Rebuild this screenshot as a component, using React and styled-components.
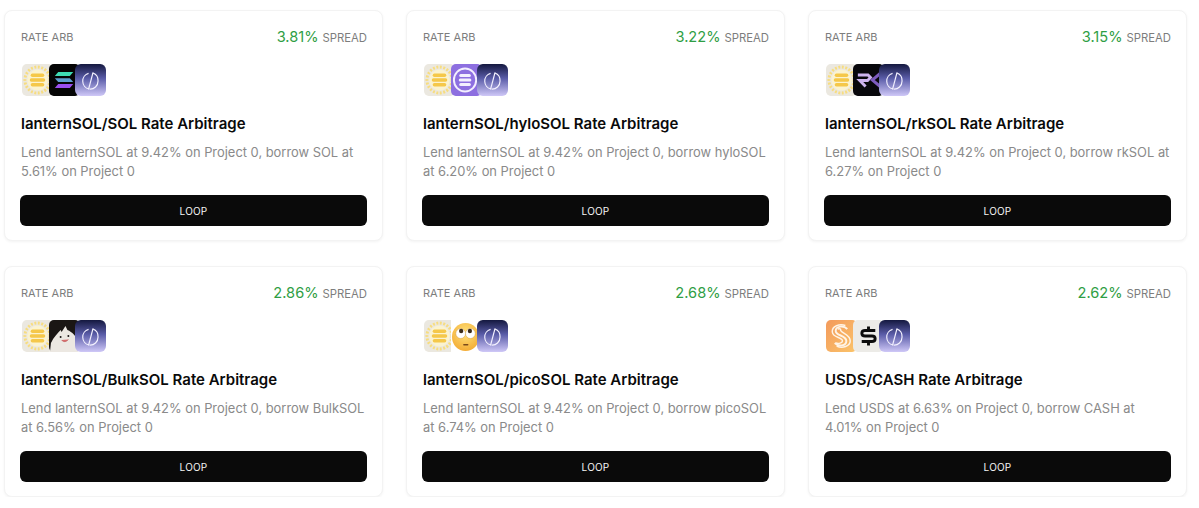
import React from "react";
import styled, { createGlobalStyle } from "styled-components";

const Global = createGlobalStyle`
  html, body {
    margin: 0;
    padding: 0;
    background: #fff;
    font-family: Inter, "Liberation Sans", sans-serif;
  }
`;

const Grid = styled.div`
  display: grid;
  grid-template-columns: repeat(3, 379px);
  column-gap: 23px;
  row-gap: 25px;
  padding: 10px 0 0 4px;
`;

const Card = styled.div`
  box-sizing: border-box;
  height: 231px;
  padding: 15px 15px 14px;
  background: #fff;
  border: 1px solid #f3f3f3;
  border-radius: 8px;
  box-shadow: 0 1px 3px rgba(0, 0, 0, 0.05);
  display: flex;
  flex-direction: column;
`;

const Header = styled.div`
  display: flex;
  justify-content: space-between;
  align-items: center;
  height: 22px;
`;

const Tag = styled.span`
  font-size: 11px;
  color: #7d7d7d;
  margin-left: 1px;
`;

const Spread = styled.span`
  font-size: 11.3px;
  color: #7d7d7d;
  display: flex;
  align-items: baseline;
  gap: 4px;
`;

const Pct = styled.span`
  font-size: 14.6px;
  color: #2f9e44;
`;

const Icons = styled.div`
  display: flex;
  margin: 16px 0 0 2px;
  height: 32px;
`;

const Icon = styled.svg`
  width: 31px;
  height: 32px;
  display: block;
  margin-left: -4.5px;
  &:first-child {
    margin-left: 0;
  }
`;

const Title = styled.h3`
  margin: 17px 0 0 1px;
  font-size: 15px;
  line-height: 22px;
  font-weight: 600;
  color: #0a0a0a;
`;

const Desc = styled.p`
  margin: 8px 0 0 1px;
  font-size: 12.9px;
  line-height: 19px;
  color: #8a8a8a;
`;

const Button = styled.button`
  margin-top: auto;
  height: 31px;
  border: none;
  border-radius: 6px;
  background: #0a0a0a;
  color: #f5f5f5;
  font-family: inherit;
  font-size: 10px;
  font-weight: 400;
  letter-spacing: 0.2px;
  cursor: pointer;
`;

const Lantern = () => (
  <Icon viewBox="0 0 32 32" preserveAspectRatio="none">
    <rect width="32" height="32" rx="5" fill="#ebe8e0" />
    <circle cx="16" cy="16" r="13" fill="none" stroke="#f7dd80" strokeWidth="3" strokeDasharray="2 1.6" />
    <circle cx="16" cy="16" r="10.5" fill="#fbf3cf" />
    <rect x="9" y="9.5" width="14" height="3.4" rx="1.7" fill="#f5c84a" />
    <rect x="8" y="14.3" width="16" height="3.4" rx="1.7" fill="#f5c84a" />
    <rect x="9" y="19.1" width="14" height="3.4" rx="1.7" fill="#f5c84a" />
  </Icon>
);

const Phi = () => (
  <Icon viewBox="0 0 32 32" preserveAspectRatio="none">
    <defs>
      <linearGradient id="phiBg" x1="0" y1="0" x2="0" y2="1">
        <stop offset="0" stopColor="#14183f" />
        <stop offset="0.45" stopColor="#5a5ca8" />
        <stop offset="1" stopColor="#cfc8f7" />
      </linearGradient>
    </defs>
    <rect width="32" height="32" rx="6" fill="url(#phiBg)" />
    <path d="M14 9.4 A8 8 0 0 0 14.5 25" fill="none" stroke="#f4f2ff" strokeWidth="1.2" />
    <path d="M18.5 9 A8 8 0 0 1 23.8 17 A8 8 0 0 1 15 25" fill="none" stroke="#f4f2ff" strokeWidth="1.2" />
    <path d="M18.6 8.5 L14 25.4" fill="none" stroke="#f4f2ff" strokeWidth="1.2" />
  </Icon>
);

const Solana = () => (
  <Icon viewBox="0 0 32 32" preserveAspectRatio="none">
    <rect width="32" height="32" rx="5" fill="#050505" />
    <path d="M9.5 8 H25 L21.5 12 H6 Z" fill="#3fdcb4" />
    <path d="M6 14.2 H21.5 L25 18 H9.5 Z" fill="#5f9fd0" />
    <path d="M9.5 20 H25 L21.5 24 H6 Z" fill="#9b4ff0" />
  </Icon>
);

const Hylo = () => (
  <Icon viewBox="0 0 32 32" preserveAspectRatio="none">
    <rect width="32" height="32" rx="5" fill="#8d6fe0" />
    <circle cx="14.5" cy="16" r="11.5" fill="none" stroke="#f3effe" strokeWidth="2" />
    <rect x="8.5" y="10" width="12" height="3" rx="1.5" fill="#f3effe" />
    <rect x="8" y="14.5" width="13" height="3" rx="1.5" fill="#f3effe" />
    <rect x="8.5" y="19" width="12" height="3" rx="1.5" fill="#f3effe" />
  </Icon>
);

const Rk = () => (
  <Icon viewBox="0 0 32 32" preserveAspectRatio="none">
    <rect width="32" height="32" rx="5" fill="#08080c" />
    <path d="M5 11 H15.5 L18 13.5 L15 16.5 H7 L13 22.5" fill="none" stroke="#cdb4ee" strokeWidth="3" />
    <path d="M28 9.5 L20 16 L28 22.5" fill="none" stroke="#7e5cc0" strokeWidth="3" />
  </Icon>
);

const Bulk = () => (
  <Icon viewBox="0 0 32 32" preserveAspectRatio="none">
    <rect width="32" height="32" rx="5" fill="#1a1614" />
    <path d="M1 32 L2 23 C5 17 9 13 12 10 L13 12 L17 6 L19 10 C24 12 28 16 30 22 L30 32 Z" fill="#ece8e2" />
    <circle cx="12" cy="17" r="1" fill="#1a1614" />
    <circle cx="20" cy="16" r="1" fill="#1a1614" />
    <path d="M13 20 C15 22.5 18 22 20 19.5" fill="#d86d6d" stroke="#b55" strokeWidth="0.6" />
  </Icon>
);

const Pico = () => (
  <Icon viewBox="0 0 32 32" preserveAspectRatio="none">
    <defs>
      <radialGradient id="picoFace" cx="0.5" cy="0.35" r="0.75">
        <stop offset="0" stopColor="#ffe27a" />
        <stop offset="1" stopColor="#f2a52c" />
      </radialGradient>
    </defs>
    <rect width="32" height="32" fill="#fff" />
    <circle cx="15" cy="17" r="14" fill="url(#picoFace)" />
    <circle cx="10" cy="13.5" r="5" fill="#fff" stroke="#c98f3a" strokeWidth="0.4" />
    <circle cx="20" cy="13.5" r="5" fill="#fff" stroke="#c98f3a" strokeWidth="0.4" />
    <circle cx="10.5" cy="11" r="2.2" fill="#3b2a1a" />
    <circle cx="19.5" cy="11" r="2.2" fill="#3b2a1a" />
    <rect x="12.5" y="24" width="5.5" height="1.6" rx="0.8" fill="#7a4a1a" />
  </Icon>
);

const Usds = () => (
  <Icon viewBox="0 0 32 32" preserveAspectRatio="none">
    <defs>
      <linearGradient id="usdsBg" x1="0" y1="0" x2="1" y2="1">
        <stop offset="0" stopColor="#f39a5c" />
        <stop offset="1" stopColor="#fbc46a" />
      </linearGradient>
    </defs>
    <rect width="32" height="32" rx="5" fill="url(#usdsBg)" />
    <path d="M22 9 C18 5 10 6 10 11 C10 16 21 15 21 21 C21 26 13 27 9 23" fill="none" stroke="#fff4e6" strokeWidth="2" />
    <path d="M20 5.5 C14 3.5 6 6 6.5 12 C7 18 17 17 17 21 C17 23 13 24 10 23 M12 9 C16 8 15 10 15 10 C15 13 25 14 25 21 C25 26 17 29 11 26" fill="none" stroke="#fff4e6" strokeWidth="1.5" />
  </Icon>
);

const Cash = () => (
  <Icon viewBox="0 0 32 32" preserveAspectRatio="none">
    <rect width="32" height="32" rx="5" fill="#ecebe7" />
    <path d="M23 10.5 H12.5 C8 10.5 8 16 12.5 16 H19.5 C24 16 24 21.5 19.5 21.5 H9" fill="none" stroke="#0c0c0c" strokeWidth="3" />
    <path d="M16 6.5 V10 M16 22 V25.5" stroke="#0c0c0c" strokeWidth="3" />
  </Icon>
);

const cards = [
  { pair: "lanternSOL/SOL", spread: "3.81%", desc: "Lend lanternSOL at 9.42% on Project 0, borrow SOL at 5.61% on Project 0", A: Lantern, B: Solana },
  { pair: "lanternSOL/hyloSOL", spread: "3.22%", desc: "Lend lanternSOL at 9.42% on Project 0, borrow hyloSOL at 6.20% on Project 0", A: Lantern, B: Hylo },
  { pair: "lanternSOL/rkSOL", spread: "3.15%", desc: "Lend lanternSOL at 9.42% on Project 0, borrow rkSOL at 6.27% on Project 0", A: Lantern, B: Rk },
  { pair: "lanternSOL/BulkSOL", spread: "2.86%", desc: "Lend lanternSOL at 9.42% on Project 0, borrow BulkSOL at 6.56% on Project 0", A: Lantern, B: Bulk },
  { pair: "lanternSOL/picoSOL", spread: "2.68%", desc: "Lend lanternSOL at 9.42% on Project 0, borrow picoSOL at 6.74% on Project 0", A: Lantern, B: Pico },
  { pair: "USDS/CASH", spread: "2.62%", desc: "Lend USDS at 6.63% on Project 0, borrow CASH at 4.01% on Project 0", A: Usds, B: Cash },
];

const App = () => (
  <>
    <Global />
    <Grid>
      {cards.map(({ pair, spread, desc, A, B }) => (
        <Card key={pair}>
          <Header>
            <Tag>RATE ARB</Tag>
            <Spread>
              <Pct>{spread}</Pct> SPREAD
            </Spread>
          </Header>
          <Icons>
            <A />
            <B />
            <Phi />
          </Icons>
          <Title>{pair} Rate Arbitrage</Title>
          <Desc>{desc}</Desc>
          <Button>LOOP</Button>
        </Card>
      ))}
    </Grid>
  </>
);

export default App;
